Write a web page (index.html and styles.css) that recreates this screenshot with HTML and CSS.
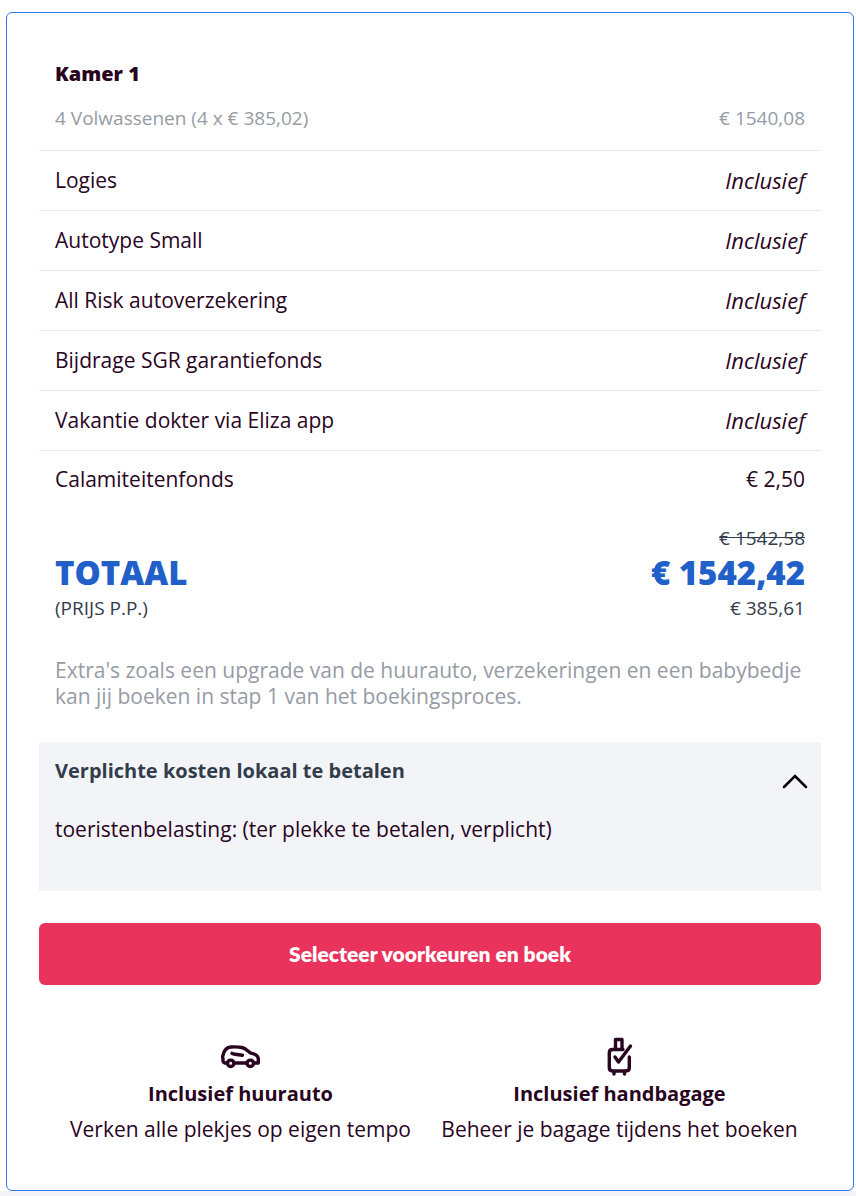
FILE: index.html
```html
<!DOCTYPE html>
<html lang="nl">
<head>
    <meta charset="UTF-8">
    <meta name="viewport" content="width=device-width, initial-scale=1.0">
    <title>Prijsoverzicht</title>
    <link rel="stylesheet" href="styles.css">
</head>
<body>
    <main class="price-card">
        <h2 class="room-title">Kamer 1</h2>

        <table class="price-table">
            <tbody>
                <tr class="persons">
                    <td>4 Volwassenen (4 x € 385,02)</td>
                    <td class="amount">€ 1540,08</td>
                </tr>
                <tr>
                    <td>Logies</td>
                    <td class="amount"><em>Inclusief</em></td>
                </tr>
                <tr>
                    <td>Autotype Small</td>
                    <td class="amount"><em>Inclusief</em></td>
                </tr>
                <tr>
                    <td>All Risk autoverzekering</td>
                    <td class="amount"><em>Inclusief</em></td>
                </tr>
                <tr>
                    <td>Bijdrage SGR garantiefonds</td>
                    <td class="amount"><em>Inclusief</em></td>
                </tr>
                <tr>
                    <td>Vakantie dokter via Eliza app</td>
                    <td class="amount"><em>Inclusief</em></td>
                </tr>
                <tr class="last">
                    <td>Calamiteitenfonds</td>
                    <td class="amount">€ 2,50</td>
                </tr>
            </tbody>
        </table>

        <div class="total">
            <div class="total-labels">
                <strong class="total-main">TOTAAL</strong>
                <span class="total-small">(PRIJS P.P.)</span>
            </div>
            <div class="total-amounts">
                <s class="total-small">€ 1542,58</s>
                <strong class="total-main">€ 1542,42</strong>
                <span class="total-small">€ 385,61</span>
            </div>
        </div>

        <p class="extras">Extra's zoals een upgrade van de huurauto, verzekeringen en een babybedje kan jij boeken in stap 1 van het boekingsproces.</p>

        <section class="local-costs">
            <button type="button" class="local-toggle" aria-expanded="true" aria-controls="local-body">
                <span>Verplichte kosten lokaal te betalen</span>
                <svg class="chevron" viewBox="0 0 26 16" aria-hidden="true">
                    <path d="M2 14 L13 3 L24 14"/>
                </svg>
            </button>
            <p class="local-body" id="local-body">toeristenbelasting: (ter plekke te betalen, verplicht)</p>
        </section>

        <button type="button" class="book-btn">Selecteer voorkeuren en boek</button>

        <div class="usps">
            <div class="usp">
                <svg class="usp-icon" viewBox="1 0 40 40" aria-hidden="true">
                    <path d="M6.5 26H4.500Q3 25.500 3 24V21.500Q2 20 3 18.500Q4.500 10.500 11 10Q17 9.500 22 10.500C26 11.500 28 14.500 31 16.200C35 17 38 18.500 38.300 21.500V26H34.500M14.800 26H26.200"/>
                    <path d="M12 16.300Q13 17 15 17.200L22.500 18.300"/>
                    <circle cx="10.700" cy="26.300" r="3.200"/>
                    <circle cx="30.300" cy="26.300" r="3.200"/>
                </svg>
                <h3>Inclusief huurauto</h3>
                <p>Verken alle plekjes op eigen tempo</p>
            </div>
            <div class="usp">
                <svg class="usp-icon" viewBox="1 0 40 40" aria-hidden="true">
                    <path d="M16.500 12V2.500H23V12"/>
                    <path d="M24 12.500H13.500Q10.300 12.500 10.300 15.700V30.500Q10.300 34 13.500 34H27Q30.300 34 30.300 30.500V20"/>
                    <path d="M16 20L19.500 25L31.500 9M15 34.500V37M25.500 34.500V37"/>
                </svg>
                <h3>Inclusief handbagage</h3>
                <p>Beheer je bagage tijdens het boeken</p>
            </div>
        </div>
    </main>
</body>
</html>
```

FILE: styles.css
```css
* {
    box-sizing: border-box;
}

html {
    background-color: #f5f5f7;
}

body {
    margin: 0;
    padding: 12px 2px 0 6px;
    background-color: #fff;
    color: #29051f;
    font-family: "Open Sans", "Liberation Sans", sans-serif;
    font-size: 21px;
    line-height: 26px;
}

h2, h3, p {
    margin: 0;
}

button {
    border: none;
    font-family: inherit;
    cursor: pointer;
}

.price-card {
    padding: 48px 32px;
    border: 1px solid #3279e8;
    border-radius: 6px;
}

.room-title {
    padding: 0 16px;
    font-size: 20px;
    font-weight: 800;
}

/* price lines */
.price-table {
    width: 100%;
    border-collapse: collapse;
}

.price-table td {
    height: 60px;
    padding: 0 16px;
    border-top: 1px solid #e8e8e8;
}

.price-table .persons td {
    height: 63px;
    border-top: none;
    color: #969ba5;
    font-size: 19px;
}

.price-table .last td {
    height: 58px;
}

.price-table .amount {
    text-align: right;
}

.price-table em {
    font-size: 22px;
}

/* total */
.total {
    display: flex;
    justify-content: space-between;
    align-items: flex-end;
    padding: 17px 16px 0;
    color: #323c4b;
}

.total-labels,
.total-amounts {
    display: flex;
    flex-direction: column;
}

.total-amounts {
    text-align: right;
}

.total-main {
    color: #2060c8;
    font-size: 33px;
    font-weight: 800;
    line-height: 44px;
}

.total-small {
    font-size: 19px;
}

.extras {
    padding: 36px 16px 33px;
    color: #969ba5;
}

/* costs paid on location */
.local-costs {
    padding: 16px 13px 49px 16px;
    background-color: #f2f4f8;
}

.local-toggle {
    display: flex;
    justify-content: space-between;
    align-items: flex-start;
    width: 100%;
    padding: 0;
    background: none;
    color: #323c4b;
    font-size: 20px;
    font-weight: 700;
    line-height: 26px;
    text-align: left;
}

.chevron {
    width: 26px;
    height: 16px;
    margin-top: 15px;
    fill: none;
    stroke: #000;
    stroke-width: 2.5;
    stroke-linecap: round;
}

.local-body {
    margin-top: 27px;
}

.book-btn {
    display: block;
    width: 100%;
    margin-top: 32px;
    padding: 18px;
    border-radius: 6px;
    background-color: #ea335c;
    color: #fff;
    font-family: Lato, sans-serif;
    font-size: 21px;
    font-weight: 800;
    line-height: 26px;
}

/* inclusive services */
.usps {
    display: grid;
    grid-template-columns: 1fr 1fr;
    gap: 8px;
    margin-top: 52px;
    padding: 0 16px;
}

.usp {
    text-align: center;
}

.usp h3 {
    margin-bottom: 9px;
    font-size: 20px;
    font-weight: 700;
}

.usp-icon {
    display: block;
    width: 40px;
    height: 40px;
    margin: 0 auto 4px;
    fill: none;
    stroke: #29051f;
    stroke-width: 3.4;
    stroke-linecap: round;
    stroke-linejoin: round;
}
```
